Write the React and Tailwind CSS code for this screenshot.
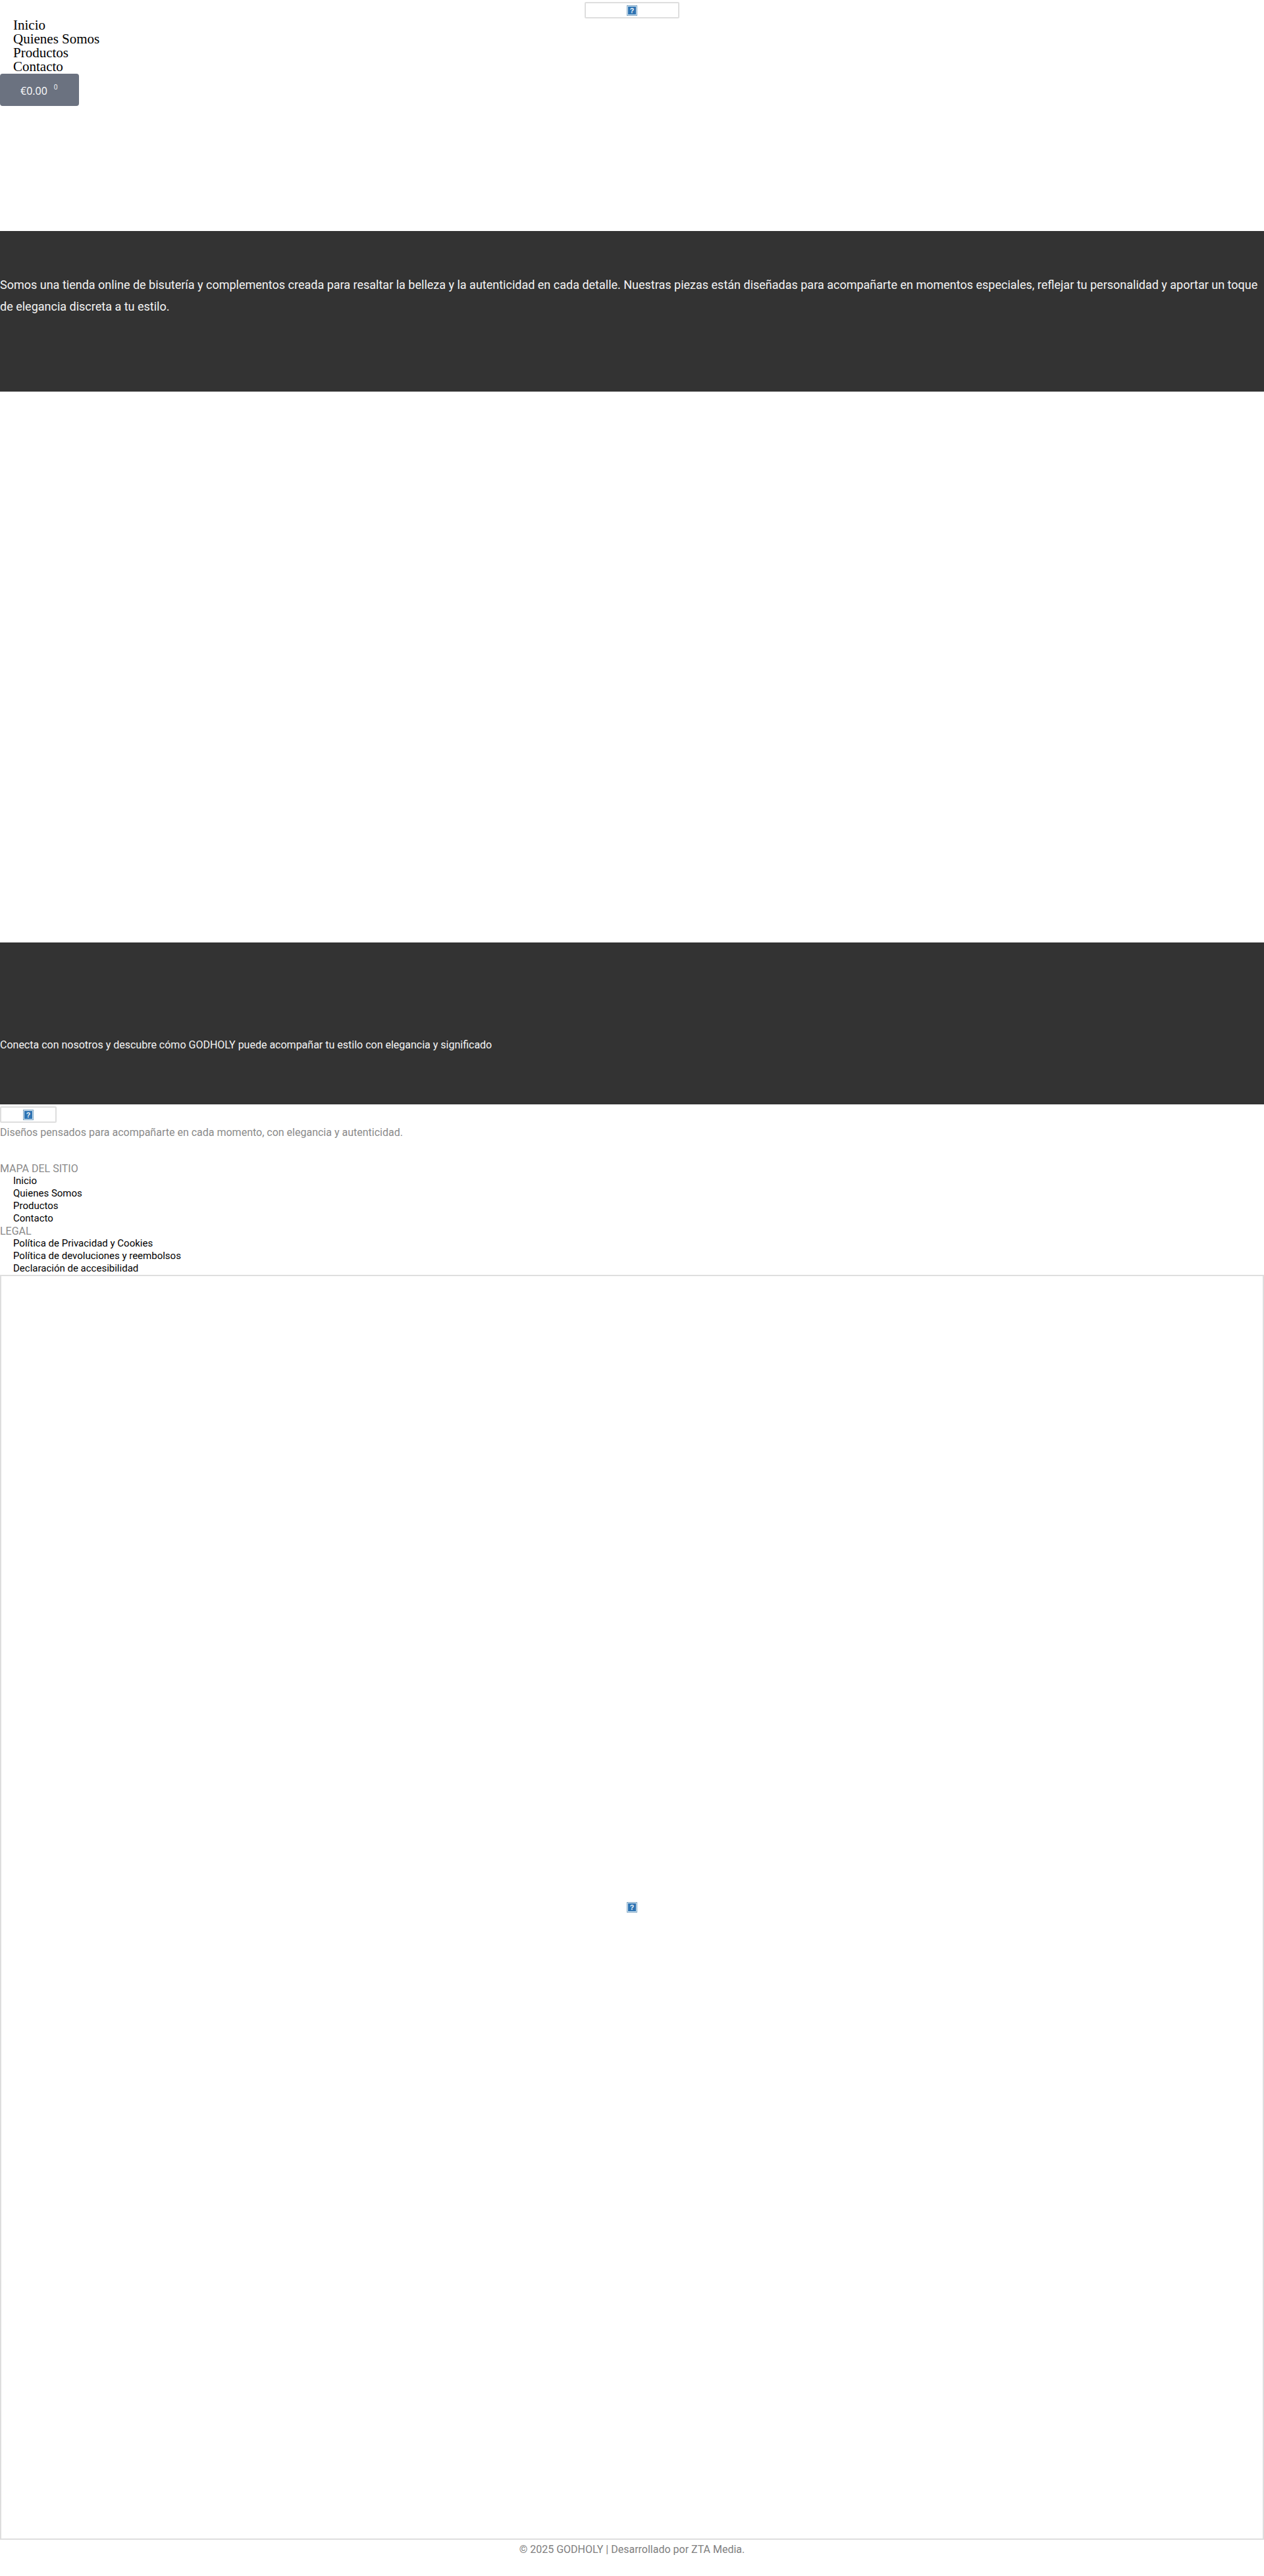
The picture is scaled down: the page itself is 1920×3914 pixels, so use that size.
import React from 'react';

const roboto = { fontFamily: 'Roboto, sans-serif' };

// broken image placeholder, the browser's blue question mark
const BrokenImage = () => (
    <svg width="16" height="16" viewBox="0 0 16 16" className="block shrink-0">
        <rect x="0.5" y="0.5" width="15" height="15" fill="#d4e6f3" stroke="#7fa6c4" />
        <rect x="2" y="2" width="12" height="12" fill="#2f74b3" />
        <text x="8" y="12" textAnchor="middle" fontSize="10.5" fontWeight="700" fill="#eef7fd" fontFamily="Liberation Sans, sans-serif">?</text>
    </svg>
);

const navLinks = ['Inicio', 'Quienes Somos', 'Productos', 'Contacto'];
const legalLinks = ['Política de Privacidad y Cookies', 'Política de devoluciones y reembolsos', 'Declaración de accesibilidad'];

const App = () => {
    return (
        <div className="h-[3914px] overflow-hidden bg-white antialiased" style={roboto}>
            <header className="h-[351px]">
                <div className="flex justify-center pt-[3px]">
                    <div className="flex h-[25px] w-[144px] items-center justify-center rounded-[2px] border-2 border-[#dedede]">
                        <BrokenImage />
                    </div>
                </div>
                <ul className="pl-5 text-[21px] leading-[21px] text-black" style={{ fontFamily: '"Liberation Serif", serif' }}>
                    {navLinks.map(link => (
                        <li key={link}>{link}</li>
                    ))}
                </ul>
                <button className="flex h-[49px] w-[120px] rounded-[4px] bg-[#6b7280] pl-[31px] pt-[15px] text-white" style={{ fontFamily: '"Open Sans", sans-serif' }}>
                    <span className="text-[16px] leading-[22px]">€0.00</span>
                    <span className="ml-[10px] text-[10px] leading-[10px]">0</span>
                </button>
            </header>

            <section className="h-[244px] bg-[#333333] pt-[65px]">
                <p className="text-[18px] leading-[33px] text-[#f5f5f5]">
                    Somos una tienda online de bisutería y complementos creada para resaltar la belleza y la autenticidad en cada detalle. Nuestras piezas están diseñadas para acompañarte en momentos especiales, reflejar tu personalidad y aportar un toque de elegancia discreta a tu estilo.
                </p>
            </section>

            <div className="h-[837px]" />

            <section className="h-[246px] bg-[#333333] pt-[144px]">
                <p className="text-[16px] leading-6 text-[#f5f5f5]">
                    Conecta con nosotros y descubre cómo GODHOLY puede acompañar tu estilo con elegancia y significado
                </p>
            </section>

            <footer>
                <div className="pt-[3px]">
                    <div className="flex h-[25px] w-[86px] items-center justify-center rounded-[2px] border-2 border-[#dedede]">
                        <BrokenImage />
                    </div>
                </div>
                <p className="mt-[3px] text-[16px] leading-6 text-[#8a8a8a]">
                    Diseños pensados para acompañarte en cada momento, con elegancia y autenticidad.
                </p>
                <h3 className="mt-[33px] text-[16px] leading-[19px] text-[#8a8a8a]">MAPA DEL SITIO</h3>
                <ul className="pl-5 text-[15px] leading-[19px] text-black">
                    {navLinks.map(link => (
                        <li key={link}>{link}</li>
                    ))}
                </ul>
                <h3 className="text-[16px] leading-[19px] text-[#8a8a8a]">LEGAL</h3>
                <ul className="pl-5 text-[15px] leading-[19px] text-black">
                    {legalLinks.map(link => (
                        <li key={link}>{link}</li>
                    ))}
                </ul>
                <div className="flex h-[1922px] items-center justify-center border-2 border-[#dedede]">
                    <BrokenImage />
                </div>
                <p className="pt-[3px] text-center text-[16px] leading-6 text-[#808080]">© 2025 GODHOLY | Desarrollado por ZTA Media.</p>
            </footer>
        </div>
    );
};

export default App;
